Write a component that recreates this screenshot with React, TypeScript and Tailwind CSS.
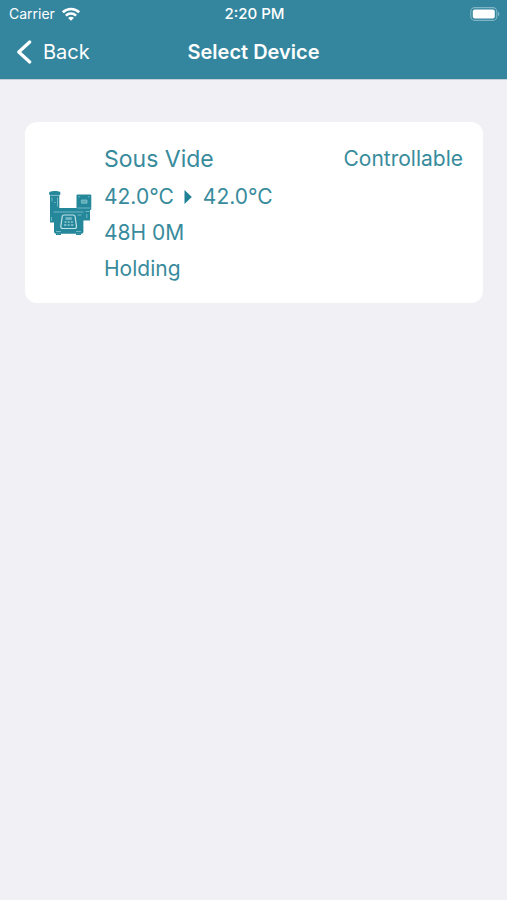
type Device = {
  name: string;
  current: string;
  target: string;
  time: string;
  state: string;
  access: string;
};

const devices: Device[] = [
  {
    name: "Sous Vide",
    current: "42.0°C",
    target: "42.0°C",
    time: "48H 0M",
    state: "Holding",
    access: "Controllable",
  },
];

const WifiIcon = () => (
  <svg width="18" height="14" viewBox="0 0 18 14" fill="none" stroke="currentColor" strokeWidth="2.6" aria-hidden="true">
    <path d="M0.9 5.3a11.6 11.6 0 0 1 16.2 0" />
    <path d="M3.9 8.6a7.3 7.3 0 0 1 10.2 0" />
    <path d="M9 13.8 6.1 10.9a4 4 0 0 1 5.8 0Z" fill="currentColor" stroke="none" />
  </svg>
);

const BatteryIcon = () => (
  <svg width="30" height="14" viewBox="0 0 30 14" fill="none" aria-hidden="true">
    <rect x="0.8" y="0.6" width="26" height="12.8" rx="4" stroke="#7fb5c6" strokeWidth="1.1" />
    <rect x="2.8" y="2.5" width="22" height="9" rx="2" fill="#fff" />
    <path d="M28 4.8c1.8.6 1.8 3.8 0 4.4Z" fill="#7fb5c6" />
  </svg>
);

const CookerIcon = () => (
  <svg width="44" height="46" viewBox="0 0 44 46" className="shrink-0" aria-hidden="true">
    <g fill="#24889a">
      {/* circulator stick */}
      <path d="M2 1.8C4 .6 10 .6 11.8 1.8c1 .8.8 2.6-.4 3.8H2.3C.6 4.4.6 2.6 2 1.8Z" />
      <path d="M2 5.5h9.3V32.5H2Z" />
      {/* wall controller */}
      <rect x="28.5" y="4.5" width="14.8" height="15.5" rx="1" />
      <path d="M30 19.5h12v11H30Z" />
      {/* water bath */}
      <rect x="4.5" y="18" width="32" height="5" rx="1.5" />
      <path d="M6 22h29.4v19.8a2 2 0 0 1-2 2H8a2 2 0 0 1-2-2Z" />
      <path d="M8 43.5h5V45H8ZM28 43.5h5V45h-5Z" />
    </g>
    <g fill="none" stroke="#83c3ce" strokeWidth="0.8">
      <path d="M2.8 5.4h8M4 7.5v4M9.5 7.5v9M6.2 12.5h1.6M3.5 27v4" />
      <path d="M30.2 6.8h1.6M40 6.8h1.6M29.5 18h13M37.5 21.5h4M38.8 24v4" />
      <path d="M33.4 10h5.6v3.2h-5.6Z" fill="#83c3ce" fillOpacity="0.6" />
      <path d="M5.5 22h30M8 41.5h5M28 41.5h5M29.5 25h4" />
    </g>
    <path
      d="M16 25h9.4a1.6 1.6 0 0 1 1.6 1.2l1.5 10.1a1.9 1.9 0 0 1-1.8 2.2H14.6a1.9 1.9 0 0 1-1.8-2.2l1.5-10.1A1.6 1.6 0 0 1 16 25Z"
      fill="#24889a"
      stroke="#c3e2e7"
      strokeWidth="1.2"
    />
    <path d="M17.5 27.2h6.3v2.7h-6.3Z" fill="#79bac6" />
    <path
      d="M16.5 32h2M19.7 32h2M22.9 32h2M16 35h2.5M19.7 35h2M22.9 35h2.5"
      stroke="#91c9d2"
      strokeWidth="1.7"
    />
  </svg>
);

const StatusBar = () => (
  <div className="grid h-7 grid-cols-[1fr_auto_1fr] items-center pl-[9px] pr-[7px]">
    <div className="flex items-center gap-[7px] text-sm">
      Carrier
      <WifiIcon />
    </div>
    <time className="text-center text-[15px] font-medium">2:20 PM</time>
    <div className="flex justify-end">
      <BatteryIcon />
    </div>
  </div>
);

const NavBar = () => (
  <nav className="grid h-[51px] grid-cols-[1fr_auto_1fr] items-center px-4 pb-[3px]">
    <button type="button" className="flex items-center gap-[11px] text-xl">
      <svg width="16" height="24" viewBox="0 0 16 24" fill="none" stroke="currentColor" strokeWidth="3.2" strokeLinecap="round" strokeLinejoin="round" aria-hidden="true">
        <path d="M13.7 2 2.8 12l10.9 10" />
      </svg>
      Back
    </button>
    <h1 className="text-xl font-semibold">Select Device</h1>
  </nav>
);

const DeviceCard = ({ device }: { device: Device }) => (
  <article className="flex items-center rounded-xl bg-white pb-4 pl-[23px] pr-5 pt-[17px] text-[#388b9c]">
    <CookerIcon />
    <div className="ml-3 flex-1 text-[21px] leading-9">
      <div className="flex items-center justify-between">
        <h2 className="text-[23px] leading-10">{device.name}</h2>
        <span>{device.access}</span>
      </div>
      <p className="flex items-center">
        {device.current}
        <svg width="8" height="14" viewBox="0 0 8 14" className="ml-[10px] mr-[11px]" aria-label="to" role="img">
          <path d="M0.5 0 7.8 7l-7.3 7Z" fill="#1f8296" />
        </svg>
        {device.target}
      </p>
      <p>{device.time}</p>
      <p>{device.state}</p>
    </div>
  </article>
);

export default function App() {
  return (
    <div className="min-h-screen bg-[#f0f0f5] font-['Inter',sans-serif]">
      <header className="border-b border-[#c5cfd7] bg-[#34869e] text-white">
        <StatusBar />
        <NavBar />
      </header>
      <main className="flex flex-col gap-6 pl-[25px] pr-6 pt-[42px]">
        {devices.map((device) => (
          <DeviceCard key={device.name} device={device} />
        ))}
      </main>
    </div>
  );
}
